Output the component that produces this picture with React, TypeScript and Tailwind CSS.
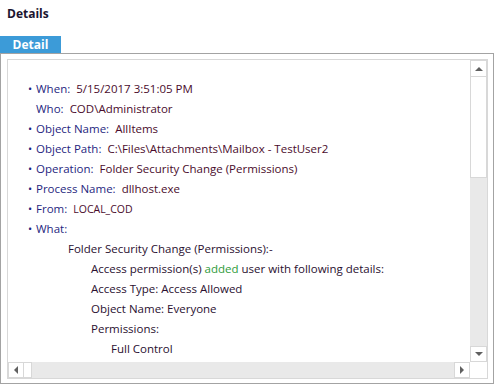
import React from "react";

const font = { fontFamily: '"Open Sans", "Noto Sans", sans-serif' };

type Row = { bullet?: boolean; label: string; value?: string; small?: boolean };

const rows: Row[] = [
  { bullet: true, label: "When:", value: "5/15/2017 3:51:05 PM" },
  { label: "Who:", value: "COD\\Administrator" },
  { bullet: true, label: "Object Name:", value: "AllItems" },
  { bullet: true, label: "Object Path:", value: "C:\\Files\\Attachments\\Mailbox - TestUser2" },
  { bullet: true, label: "Operation:", value: "Folder Security Change (Permissions)" },
  { bullet: true, label: "Process Name:", value: "dllhost.exe" },
  { bullet: true, label: "From:", value: "LOCAL_COD", small: true },
  { bullet: true, label: "What:" },
];

function Tri({ dir }: { dir: "up" | "down" | "left" | "right" }) {
  const pts = {
    up: "0,4 4,0 8,4",
    down: "0,0 8,0 4,4",
    left: "4,0 4,8 0,4",
    right: "0,0 4,4 0,8",
  }[dir];
  const vertical = dir === "up" || dir === "down";
  return (
    <svg width={vertical ? 8 : 4} height={vertical ? 4 : 8}>
      <polygon points={pts} fill="#606060" />
    </svg>
  );
}

export default function App() {
  return (
    <div className="w-[500px] h-[390px] bg-white text-[11.5px] overflow-hidden" style={font}>
      <div className="pl-[7px] pt-[5px] h-[36px] font-bold text-[12px] text-[#1b1530]">Details</div>
      <div className="w-[61px] h-[17px] bg-[#3c9bd8] text-white font-bold text-[12px] leading-[17px] text-center">
        Detail
      </div>
      <div className="w-[494px] h-[331px] border border-[#a3a3a3] pl-[6px] pt-[5px]">
        <div className="w-[481px] h-[320px] border border-[#d8d8d8] flex flex-col">
          <div className="flex flex-1 min-h-0">
            <div className="flex-1 pt-[19px] pl-[20px] leading-[20px]">
              {rows.map((r) => (
                <div key={r.label} className="flex h-[20px] items-center whitespace-nowrap">
                  <span className="w-[8px] text-[#1f1f80] text-[11px]">{r.bullet ? "•" : ""}</span>
                  <span className="text-[#1f1f80]">{r.label}</span>
                  {r.value && (
                    <span className={`ml-[6px] text-[#4a0c2c] ${r.small ? "text-[10.5px]" : ""}`}>{r.value}</span>
                  )}
                </div>
              ))}
              <div className="h-[20px] flex items-center pl-[40px] text-[#2a1030]">
                Folder Security Change (Permissions):-
              </div>
              <div className="h-[20px] flex items-center pl-[63px] text-[#2a1030] whitespace-nowrap">
                Access permission(s)&nbsp;<span className="text-[#2e9b3a]">added</span>&nbsp;user with following details:
              </div>
              <div className="h-[20px] flex items-center pl-[63px] text-[#2a1030]">Access Type: Access Allowed</div>
              <div className="h-[20px] flex items-center pl-[63px] text-[#2a1030]">Object Name: Everyone</div>
              <div className="h-[20px] flex items-center pl-[63px] text-[#2a1030]">Permissions:</div>
              <div className="h-[20px] flex items-center pl-[83px] text-[#2a1030]">Full Control</div>
            </div>
            <div className="w-[17px] flex flex-col">
              <div className="h-[17px] border border-[#d8d8d8] flex items-center justify-center bg-white">
                <Tri dir="up" />
              </div>
              <div className="h-[101px] border-x border-b border-[#d8d8d8] bg-white" />
              <div className="flex-1 bg-[#e9e9e9]" />
              <div className="h-[16px] border border-[#d8d8d8] flex items-center justify-center bg-white">
                <Tri dir="down" />
              </div>
            </div>
          </div>
          <div className="h-[16px] flex">
            <div className="w-[16px] border border-[#d8d8d8] flex items-center justify-center bg-white">
              <Tri dir="left" />
            </div>
            <div className="w-[8px] border-y border-r border-[#d8d8d8] bg-white" />
            <div className="flex-1 bg-[#e9e9e9]" />
            <div className="w-[16px] border border-[#d8d8d8] flex items-center justify-center bg-white">
              <Tri dir="right" />
            </div>
            <div className="w-[17px] bg-white" />
          </div>
        </div>
      </div>
    </div>
  );
}
